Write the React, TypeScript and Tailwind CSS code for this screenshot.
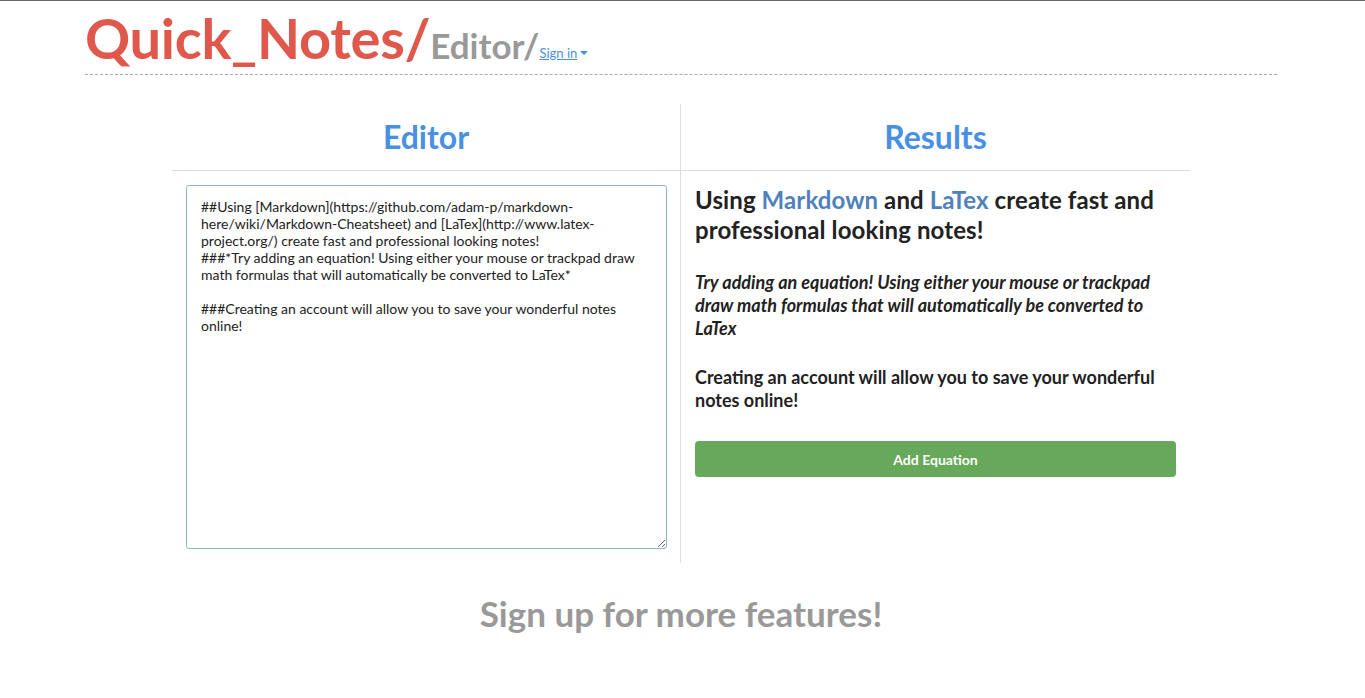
import React from "react";

export default function App() {
  return (
    <div className="min-h-[698px] w-full bg-white border-t border-[#666]" style={{ fontFamily: "Lato, 'Open Sans', sans-serif" }}>
      <div className="ml-[85px] w-[1192px]">
        <div className="flex items-end border-b border-dashed border-[#aaa] pb-[8px] h-[74px]">
          <span className="text-[#e0584c] font-bold text-[56px] leading-[56px] tracking-[-0.3px]">Quick_Notes/</span>
          <span className="text-[#999] font-bold text-[35px] leading-[35px] mb-[3px]">Editor/</span>
          <a href="#" className="text-[#4a90e2] underline text-[13px] leading-[13px] mb-[6px] flex items-center gap-[3px]">
            Sign in
            <svg width="8" height="5" viewBox="0 0 8 5"><path d="M0 0h8L4 4z" fill="#4a90e2" /></svg>
          </a>
        </div>
      </div>
      <div className="ml-[172px] w-[1018px] mt-[29px] grid grid-cols-2">
        <div className="border-r border-[#ddd]">
          <div className="h-[67px] border-b border-[#ddd] flex items-center justify-center">
            <h2 className="text-[#4a90e2] font-bold text-[32px]">Editor</h2>
          </div>
          <div className="pt-[14px] pl-[14px] pr-[13px] pb-[14px]">
            <textarea
              className="block w-full h-[364px] border border-[#93b4cc] rounded-[3px] px-[14px] py-[12px] text-[14px] leading-[17px] text-[#222] outline-none resize"
              style={{ fontFamily: "Lato, sans-serif" }}
              defaultValue={"##Using [Markdown](https://github.com/adam-p/markdown-here/wiki/Markdown-Cheatsheet) and [LaTex](http://www.latex-project.org/) create fast and professional looking notes!\n###*Try adding an equation! Using either your mouse or trackpad draw math formulas that will automatically be converted to LaTex*\n\n###Creating an account will allow you to save your wonderful notes online!"}
            />
          </div>
        </div>
        <div>
          <div className="h-[67px] border-b border-[#ddd] flex items-center justify-center">
            <h2 className="text-[#4a90e2] font-bold text-[32px]">Results</h2>
          </div>
          <div className="pl-[14px] pr-[14px] pt-[14px]">
            <h2 className="font-bold text-[24px] leading-[30px] text-[#222] tracking-[0.1px]">
              Using <a className="text-[#4f81bd]" href="#">Markdown</a> and <a className="text-[#4f81bd]" href="#">LaTex</a> create fast and professional looking notes!
            </h2>
            <h3 className="mt-[26px] font-bold italic text-[18px] leading-[23px] text-[#222]">
              Try adding an equation! Using either your mouse or trackpad draw math formulas that will automatically be converted to LaTex
            </h3>
            <h3 className="mt-[26px] font-bold text-[18px] leading-[23px] text-[#222]">
              Creating an account will allow you to save your wonderful notes online!
            </h3>
            <button className="mt-[29px] w-[481px] h-[36px] rounded-[4px] bg-[#67a85a] text-white font-bold text-[14px]">Add Equation</button>
          </div>
        </div>
      </div>
      <div className="ml-[172px] w-[1018px] text-center mt-[24px]">
        <h2 className="text-[#999] font-bold text-[35px]">Sign up for more features!</h2>
      </div>
    </div>
  );
}
